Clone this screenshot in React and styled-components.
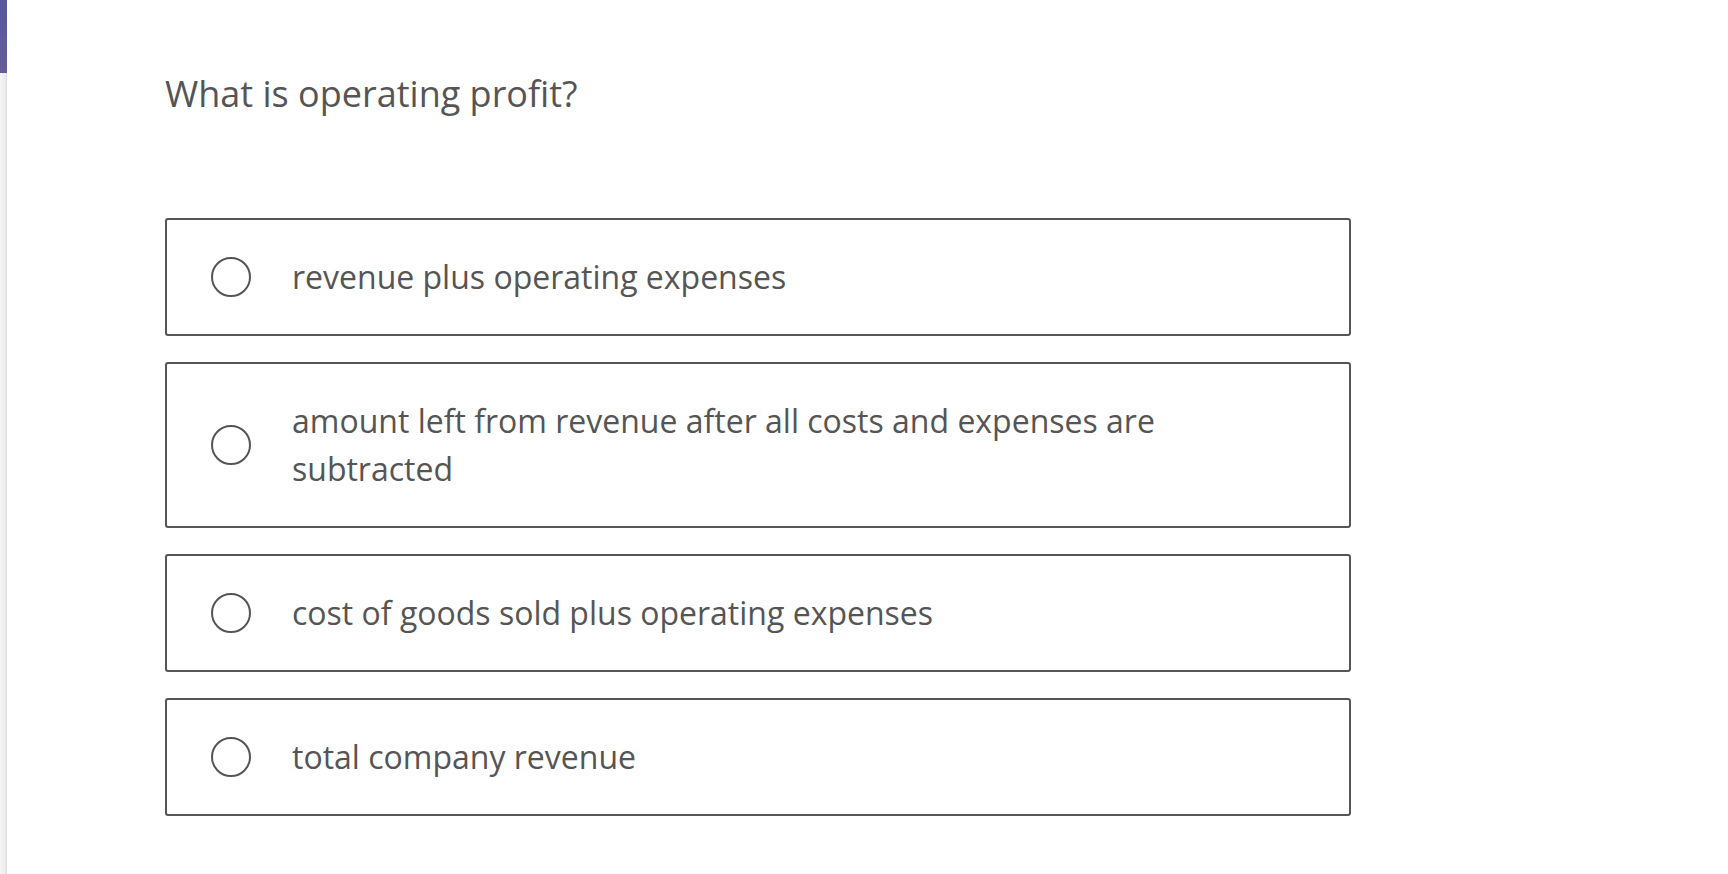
import React from 'react';
import styled, { createGlobalStyle } from 'styled-components';

const GlobalStyle = createGlobalStyle`
  html, body {
    margin: 0;
    padding: 0;
    background: #fff;
    font-family: "Open Sans", "Liberation Sans", sans-serif;
  }
`;

const Page = styled.div`
  display: flex;
  min-height: 100vh;
`;

const SideRail = styled.div`
  width: 7px;
  flex-shrink: 0;
  background: linear-gradient(to right, #f4f4f4 0%, #ececec 70%, #dcdcdc 100%);
  display: flex;
  flex-direction: column;
`;

const RailMarker = styled.div`
  height: 73px;
  background: linear-gradient(to bottom, #58589a, #655c98);
`;

const Content = styled.main`
  padding: 69px 0 0 158px;
`;

const Question = styled.h1`
  margin: 0;
  font-size: 36px;
  font-weight: 400;
  line-height: 50px;
  color: #555;
`;

const OptionList = styled.div`
  margin-top: 99px;
  display: flex;
  flex-direction: column;
  gap: 26px;
  width: 1186px;
`;

const Option = styled.label`
  display: flex;
  align-items: center;
  box-sizing: border-box;
  padding: 33px 40px 33px 44px;
  border: 2px solid #555;
  border-radius: 3px;
  cursor: pointer;
`;

const Radio = styled.span`
  width: 36px;
  height: 36px;
  flex-shrink: 0;
  border: 2px solid #555;
  border-radius: 50%;
  margin-right: 41px;
`;

const OptionText = styled.span`
  font-size: 32px;
  line-height: 48px;
  color: #555;
`;

const options = [
  'revenue plus operating expenses',
  'amount left from revenue after all costs and expenses are subtracted',
  'cost of goods sold plus operating expenses',
  'total company revenue',
];

export default function App() {
  return (
    <>
      <GlobalStyle />
      <Page>
        <SideRail>
          <RailMarker />
        </SideRail>
        <Content>
          <Question>What is operating profit?</Question>
          <OptionList>
            {options.map((text) => (
              <Option key={text}>
                <Radio />
                <OptionText>{text}</OptionText>
              </Option>
            ))}
          </OptionList>
        </Content>
      </Page>
    </>
  );
}
